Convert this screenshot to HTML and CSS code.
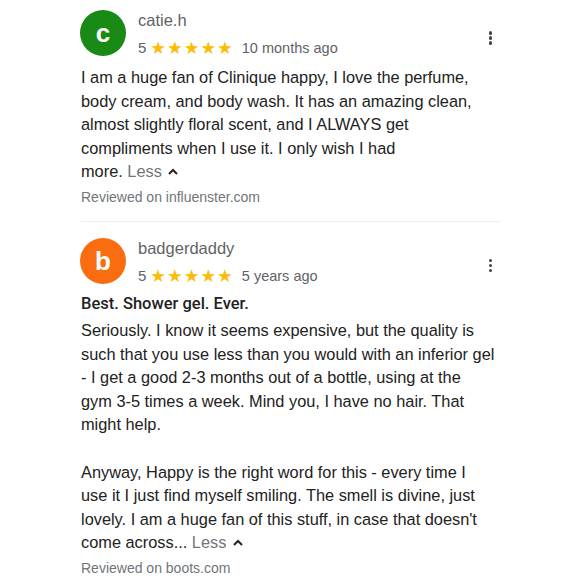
FILE: index.html
```html
<!DOCTYPE html>
<html>
<head>
<meta charset="utf-8">
<link rel="stylesheet" href="styles.css">
</head>
<body>
<div class="list">
  <div class="review">
    <div class="head">
      <div class="avatar green">c</div>
      <div class="meta">
        <div class="name">catie.h</div>
        <div class="rating"><span class="num">5</span><span class="stars">★★★★★</span><span class="time">10 months ago</span></div>
      </div>
      <div class="more"><span></span><span></span><span></span></div>
    </div>
    <p class="text">I am a huge fan of Clinique happy, I love the perfume,<br>body cream, and body wash. It has an amazing clean,<br>almost slightly floral scent, and I ALWAYS get<br>compliments when I use it. I only wish I had<br>more. <span class="less">Less <svg width="12" height="9" viewBox="0 0 12 9"><path d="M2 7 L6 3 L10 7" fill="none" stroke="#222" stroke-width="2"/></svg></span></p>
    <div class="source">Reviewed on influenster.com</div>
  </div>
  <div class="divider"></div>
  <div class="review">
    <div class="head">
      <div class="avatar orange">b</div>
      <div class="meta">
        <div class="name">badgerdaddy</div>
        <div class="rating"><span class="num">5</span><span class="stars">★★★★★</span><span class="time">5 years ago</span></div>
      </div>
      <div class="more"><span></span><span></span><span></span></div>
    </div>
    <div class="title">Best. Shower gel. Ever.</div>
    <p class="text">Seriously. I know it seems expensive, but the quality is<br>such that you use less than you would with an inferior gel<br>- I get a good 2-3 months out of a bottle, using at the<br>gym 3-5 times a week. Mind you, I have no hair. That<br>might help.<br><br>Anyway, Happy is the right word for this - every time I<br>use it I just find myself smiling. The smell is divine, just<br>lovely. I am a huge fan of this stuff, in case that doesn't<br>come across... <span class="less">Less <svg width="12" height="9" viewBox="0 0 12 9"><path d="M2 7 L6 3 L10 7" fill="none" stroke="#222" stroke-width="2"/></svg></span></p>
    <div class="source">Reviewed on boots.com</div>
  </div>
</div>
</body>
</html>
```
FILE: styles.css
```css
html, body { margin: 0; padding: 0; background: #fff; }
body { font-family: "Liberation Sans", Arial, sans-serif; color: #222; }
.list { width: 420px; padding: 10px 0 0 81px; }
.head { display: flex; align-items: flex-start; }
.avatar {
  width: 46px; height: 46px; border-radius: 50%;
  color: #fff; font-size: 26px; font-weight: bold;
  display: flex; align-items: center; justify-content: center;
  margin-left: -1px; flex: none; line-height: 1;
}
.avatar.green { background: #188a15; }
.avatar.orange { background: #f96c0f; }
.meta { margin-left: 12px; flex: 1; }
.name { font-size: 16.5px; color: #5f6368; line-height: 20px; margin-top: 0; }
.rating { display: flex; align-items: center; margin-top: 8px; font-size: 15px; color: #5f6368; line-height: 20px; }
.num { margin-right: 4px; }
.stars { color: #fbbc04; font-size: 17.5px; letter-spacing: 1px; font-family: "DejaVu Sans", sans-serif; margin-right: 8px; }
.time { font-size: 14.5px; }
.more { display: flex; flex-direction: column; gap: 1.5px; margin-top: 21px; margin-right: 9px; }
.more span { width: 3.5px; height: 3.5px; background: #444; border-radius: 50%; display: block; }
.text { margin: 8px 0 0; font-size: 16.35px; line-height: 23.6px; color: #222; white-space: nowrap; }
.less { color: #70757a; white-space: nowrap; }
.less svg { vertical-align: 1px; margin-left: 1px; }
.source { font-size: 14px; color: #70757a; margin-top: 4px; line-height: 18px; }
.divider { height: 1px; background: #eceef0; margin: 15px 0 16px; }
.title { font-family: Roboto, sans-serif; font-weight: 500; font-size: 16.5px; margin-top: 7px; line-height: 22px; color: #222; }
.title + .text { margin-top: 4px; }
```
